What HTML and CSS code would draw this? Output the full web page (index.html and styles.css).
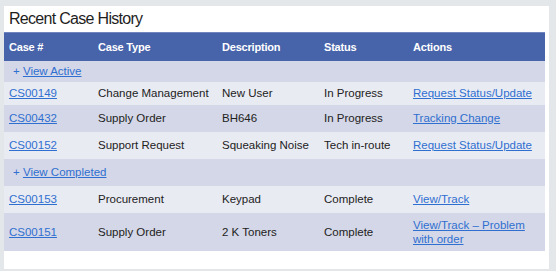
FILE: index.html
```html
<!DOCTYPE html>
<html>
<head>
<meta charset="utf-8">
<link rel="stylesheet" href="styles.css">
</head>
<body>
<div class="panel">
  <div class="title">Recent Case History</div>
  <table class="cases">
    <colgroup>
      <col class="c1"><col class="c2"><col class="c3"><col class="c4"><col class="c5">
    </colgroup>
    <thead>
      <tr class="head">
        <th>Case #</th><th>Case Type</th><th>Description</th><th>Status</th><th>Actions</th>
      </tr>
    </thead>
    <tbody>
      <tr class="group g1"><td colspan="5"><span class="plus">+</span> <a href="#">View Active</a></td></tr>
      <tr class="light r1"><td><a href="#">CS00149</a></td><td>Change Management</td><td>New User</td><td>In Progress</td><td><a href="#">Request Status/Update</a></td></tr>
      <tr class="dark r"><td><a href="#">CS00432</a></td><td>Supply Order</td><td>BH646</td><td>In Progress</td><td><a href="#">Tracking Change</a></td></tr>
      <tr class="light r"><td><a href="#">CS00152</a></td><td>Support Request</td><td>Squeaking Noise</td><td>Tech in-route</td><td><a href="#">Request Status/Update</a></td></tr>
      <tr class="group r"><td colspan="5"><span class="plus">+</span> <a href="#">View Completed</a></td></tr>
      <tr class="light r"><td><a href="#">CS00153</a></td><td>Procurement</td><td>Keypad</td><td>Complete</td><td><a href="#">View/Track</a></td></tr>
      <tr class="dark r2"><td><a href="#">CS00151</a></td><td>Supply Order</td><td>2 K Toners</td><td>Complete</td><td><a href="#">View/Track – Problem with order</a></td></tr>
    </tbody>
  </table>
</div>
</body>
</html>
```
FILE: styles.css
```css
html, body {
  margin: 0;
  padding: 0;
}
body {
  background: #e4e7ea;
  font-family: "Liberation Sans", Arial, sans-serif;
  width: 556px;
  height: 271px;
  overflow: hidden;
}
.panel {
  background: #ffffff;
  margin: 6px 7px 0 4px;
  height: 263px;
}
.title {
  height: 26px;
  line-height: 25px;
  padding-left: 5px;
  font-size: 16px;
  letter-spacing: -0.7px;
  color: #1e1e1e;
}
.cases {
  width: 541px;
  border-collapse: collapse;
  table-layout: fixed;
  font-size: 11.5px;
  color: #222222;
}
.c1 { width: 89px; }
.c2 { width: 124px; }
.c3 { width: 102px; }
.c4 { width: 89px; }
.c5 { width: 137px; }
.cases th,
.cases td {
  padding: 0 5px;
  text-align: left;
  vertical-align: middle;
  white-space: nowrap;
}
.cases td:last-child {
  white-space: normal;
  line-height: 14px;
}
.head {
  height: 28px;
  background: #4763aa;
  border-top: 1px solid #7086c0;
}
.head th {
  color: #ffffff;
  font-size: 11px;
  font-weight: bold;
  letter-spacing: -0.2px;
}
.group { background: #d4d7e7; }
.dark { background: #d4d7e7; }
.light { background: #e9ebf3; }
.g1 { height: 21px; }
.r1 { height: 23px; }
.r { height: 27px; }
.r2 { height: 38px; }
.group td { padding-left: 9px; }
.plus { color: #2f6fd0; }
.cases a {
  color: #2f6fd0;
  text-decoration: underline;
}
```
